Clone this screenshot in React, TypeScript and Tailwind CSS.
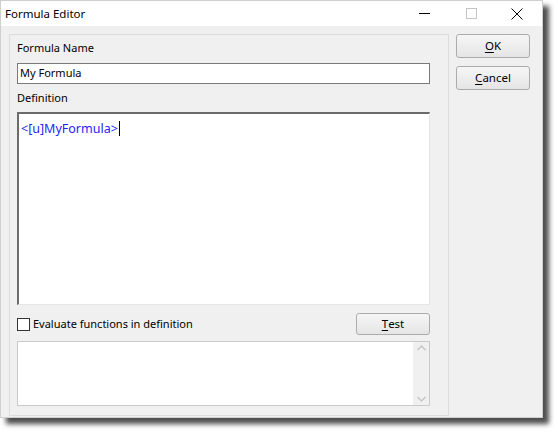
import React from "react";

function WinButton({ children, className = "" }: { children: React.ReactNode; className?: string }) {
  return (
    <div
      className={`flex items-center justify-center rounded-[3px] border border-[#acacac] bg-gradient-to-b from-[#f6f6f6] to-[#e5e5e5] text-[11.5px] text-black ${className}`}
    >
      {children}
    </div>
  );
}

export default function App() {
  return (
    <div className="h-[434px] w-[558px] bg-white" style={{ fontFamily: '"Noto Sans", sans-serif' }}>
      <div className="flex h-[418px] w-[543px] flex-col border border-[#cfcfcf] bg-[#f0f0f0] shadow-[6px_6px_5px_rgba(0,0,0,0.7)]">
        {/* title bar */}
        <div className="flex h-[25px] items-center bg-white">
          <div className="pl-[4px] text-[11.5px] text-black">Formula Editor</div>
          <div className="ml-auto flex items-center">
            <svg width="46" height="25" viewBox="0 0 46 25">
              <line x1="17" y1="12.5" x2="28" y2="12.5" stroke="#000" strokeWidth="1" />
            </svg>
            <svg width="46" height="25" viewBox="0 0 46 25">
              <rect x="18.5" y="7.5" width="10" height="10" fill="none" stroke="#c4c4c4" strokeWidth="1" />
            </svg>
            <svg width="46" height="25" viewBox="0 0 46 25" className="mr-[2px]">
              <line x1="17.5" y1="7.5" x2="28.5" y2="18.5" stroke="#000" strokeWidth="1" />
              <line x1="28.5" y1="7.5" x2="17.5" y2="18.5" stroke="#000" strokeWidth="1" />
            </svg>
          </div>
        </div>
        {/* body */}
        <div className="flex flex-1 pl-[8px] pt-[8px]">
          <div className="flex h-[382px] w-[440px] flex-col border border-[#dcdcdc] pl-[7px] pr-[18px] pt-[5px]">
            <div className="h-[16px] text-[11px] leading-[16px] text-black">Formula Name</div>
            <div className="mt-[7px] flex h-[21px] w-[413px] items-center border border-[#7a7a7a] bg-white px-[2px] text-[11px] text-black">
              My Formula
            </div>
            <div className="mt-[6px] h-[16px] text-[11px] leading-[16px] text-black">Definition</div>
            <div className="mt-[6px] h-[193px] w-[413px] border-l-2 border-t-2 border-r border-b border-l-[#6b6b6b] border-t-[#6b6b6b] border-r-[#e6e6e6] border-b-[#e6e6e6] bg-white px-[2px] pt-[1px]">
              <span className="text-[12.5px] leading-[18px] text-[#2424ff]">&lt;[u]MyFormula&gt;</span>
              <span className="ml-[1px] inline-block h-[15px] w-px translate-y-[3px] bg-black" />
            </div>
            <div className="mt-[8px] flex h-[22px] w-[413px] items-center">
              <div className="h-[13px] w-[13px] border border-[#333] bg-white" />
              <div className="ml-[3px] text-[11px] text-black">Evaluate functions in definition</div>
              <WinButton className="ml-auto h-[22px] w-[74px]">
                <span className="underline underline-offset-2">T</span>est
              </WinButton>
            </div>
            <div className="mt-[6px] flex h-[65px] w-[413px] border border-[#cacaca] bg-white">
              <div className="flex-1" />
              <div className="flex w-[16px] flex-col items-center justify-between bg-[#f0f0f0] py-[3px]">
                <svg width="9" height="6" viewBox="0 0 9 6">
                  <polyline points="0.5,5 4.5,1 8.5,5" fill="none" stroke="#c2c2c2" strokeWidth="1.2" />
                </svg>
                <svg width="9" height="6" viewBox="0 0 9 6">
                  <polyline points="0.5,1 4.5,5 8.5,1" fill="none" stroke="#c2c2c2" strokeWidth="1.2" />
                </svg>
              </div>
            </div>
          </div>
          <div className="ml-[7px] flex flex-col">
            <WinButton className="h-[24px] w-[74px]">
              <span className="underline underline-offset-2">O</span>K
            </WinButton>
            <WinButton className="mt-[8px] h-[24px] w-[74px]">
              <span className="underline underline-offset-2">C</span>ancel
            </WinButton>
          </div>
        </div>
      </div>
    </div>
  );
}
